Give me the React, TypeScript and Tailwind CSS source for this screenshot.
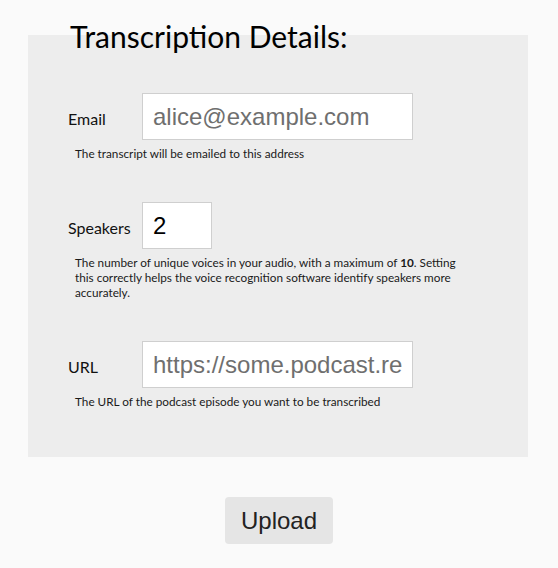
import React from 'react';

const gill = "font-['Lato','Open_Sans',sans-serif]";

interface FieldProps {
  label: string;
  input: React.ReactNode;
  help: React.ReactNode;
}

const Field: React.FC<FieldProps> = ({ label, input, help }) => {
  return (
    <div className="mb-[41px] last:mb-0">
      <div className="flex items-baseline">
        <label className={`${gill} w-[74px] text-[16px] text-[#111]`}>{label}</label>
        {input}
      </div>
      <p className={`${gill} mt-[6px] ml-[7px] max-w-[388px] text-[11.75px] leading-[15px] text-[#1a1a1a]`}>{help}</p>
    </div>
  );
};

const inputCls =
  "h-[47px] border border-[#cfcfcf] bg-white px-[10px] font-['Liberation_Sans',Arial,sans-serif] text-[24px] text-black outline-none placeholder:text-[#6f6f6f]";

export default function App() {
  return (
    <div className="min-h-[568px] w-full bg-[#fafafa] pt-[35px]">
      <div className="mx-[28px] flow-root w-[500px] bg-[#ededed] pb-[48px] pl-[40px]">
        <h2 className={`${gill} -mt-[17px] ml-[2px] text-[30px] leading-[36px] text-black`}>Transcription Details:</h2>
        <div className="mt-[39px]">
          <Field
            label="Email"
            input={<input className={`${inputCls} w-[271px]`} placeholder="alice@example.com" />}
            help="The transcript will be emailed to this address"
          />
          <Field
            label="Speakers"
            input={<input className={`${inputCls} w-[70px]`} defaultValue="2" />}
            help={
              <>
                The number of unique voices in your audio, with a maximum of <b>10</b>. Setting this correctly helps the
                voice recognition software identify speakers more accurately.
              </>
            }
          />
          <Field
            label="URL"
            input={<input className={`${inputCls} w-[271px]`} placeholder="https://some.podcast.rest/feed.xml" />}
            help="The URL of the podcast episode you want to be transcribed"
          />
        </div>
      </div>
      <div className="mt-[40px] flex justify-center">
        <button className="h-[47px] w-[108px] rounded-[4px] bg-[#e5e5e5] font-['Liberation_Sans',Arial,sans-serif] text-[24px] text-[#222]">
          Upload
        </button>
      </div>
    </div>
  );
}
